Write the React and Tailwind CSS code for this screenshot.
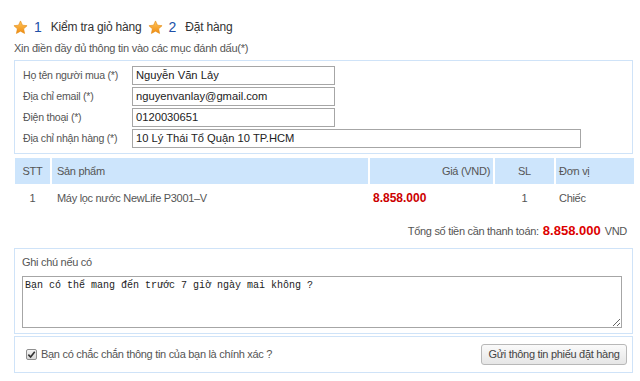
import React from "react";

function Star() {
  return (
    <svg width="15" height="15" viewBox="0 0 24 24" className="shrink-0">
      <defs>
        <linearGradient id="sg" x1="0" y1="0" x2="0" y2="1">
          <stop offset="0" stopColor="#ffc65a" />
          <stop offset="1" stopColor="#f08c12" />
        </linearGradient>
      </defs>
      <polygon
        points="12,1.5 15.1,8.3 22.5,9.1 17,14.1 18.5,21.5 12,17.8 5.5,21.5 7,14.1 1.5,9.1 8.9,8.3"
        fill="url(#sg)"
        stroke="#e48a10"
        strokeWidth="1"
        strokeLinejoin="round"
      />
    </svg>
  );
}

const rows = [
  { label: "Họ tên người mua (*)", value: "Nguyễn Văn Lảy", w: "w-[203px]" },
  { label: "Địa chỉ email (*)", value: "nguyenvanlay@gmail.com", w: "w-[203px]" },
  { label: "Điện thoại (*)", value: "0120030651", w: "w-[203px]" },
  { label: "Địa chỉ nhận hàng (*)", value: "10 Lý Thái Tổ Quận 10 TP.HCM", w: "w-[449px]" },
];

export default function App() {
  return (
    <div className="w-[640px] h-[381px] bg-white text-[#444] overflow-hidden font-['Liberation_Sans',Arial,sans-serif]">
      {/* steps */}
      <div className="mt-[19px] h-[16px] pl-[13px] flex items-center text-[12px] text-[#333]">
        <Star />
        <span className="ml-[6px] text-[14px] text-[#2050a8]">1</span>
        <span className="ml-[9px] tracking-[-0.2px]">Kiểm tra giỏ hàng</span>
        <span className="ml-[7px]"><Star /></span>
        <span className="ml-[5px] text-[14px] text-[#2050a8]">2</span>
        <span className="ml-[9px] tracking-[-0.2px]">Đặt hàng</span>
      </div>

      <div className="mt-[6px] pl-[14px] h-[14px] leading-[14px] text-[11px] text-[#555] tracking-[-0.25px]">
        Xin điền đầy đủ thông tin vào các mục đánh dấu(*)
      </div>

      {/* customer info */}
      <div className="mt-[5px] ml-[14px] w-[619px] border border-[#cfe3f8] pt-[5px] pb-[5px] pl-[8px] flex flex-col gap-[2px]">
        {rows.map((r) => (
          <div key={r.label} className="flex items-center h-[19px]">
            <div className="w-[109px] text-[10.6px] text-[#555] tracking-[-0.25px]">{r.label}</div>
            <div
              className={`${r.w} h-[19px] border border-[#a6a6a6] bg-white pl-[3px] text-[11.2px] text-[#222] leading-[17px]`}
            >
              {r.value}
            </div>
          </div>
        ))}
      </div>

      {/* table */}
      <div className="mt-[4px] ml-[15px] w-[617px] text-[11px] text-[#555] tracking-[-0.3px]">
        <div className="grid grid-cols-[35px_316px_123px_59px_78px] gap-x-[2px] h-[26px]">
          <div className="bg-[#cde5fc] flex items-center justify-center">STT</div>
          <div className="bg-[#cde5fc] flex items-center pl-[5px]">Sản phẩm</div>
          <div className="bg-[#cde5fc] flex items-center justify-end pr-[3px]">Giá (VND)</div>
          <div className="bg-[#cde5fc] flex items-center justify-center">SL</div>
          <div className="bg-[#cde5fc] flex items-center pl-[3px]">Đơn vị</div>
        </div>
        <div className="grid grid-cols-[35px_316px_123px_59px_78px] gap-x-[2px] h-[28px]">
          <div className="flex items-center justify-center">1</div>
          <div className="flex items-center pl-[5px]">Máy lọc nước NewLife P3001–V</div>
          <div className="flex items-center pl-[3px] text-[12px] font-bold text-[#cc0000] tracking-normal">8.858.000</div>
          <div className="flex items-center justify-center">1</div>
          <div className="flex items-center pl-[3px]">Chiếc</div>
        </div>
      </div>

      <div className="mt-[9px] w-[627px] flex justify-end items-baseline text-[11px] text-[#555] tracking-[-0.3px]">
        <span>Tổng số tiền cần thanh toán:</span>
        <span className="ml-[4px] text-[13px] font-bold text-[#dd0000] tracking-normal">8.858.000</span>
        <span className="ml-[4px]">VND</span>
      </div>

      {/* note */}
      <div className="mt-[7px] ml-[14px] w-[619px] h-[86px] border border-[#cfe3f8] pl-[7px] pr-[10px] pt-[6px]">
        <div className="text-[11px] text-[#555] tracking-[-0.3px] leading-[14px]">Ghi chú nếu có</div>
        <textarea
          readOnly
          defaultValue="Bạn có thể mang đến trước 7 giờ ngày mai không ?"
          className="mt-[7px] block w-[600px] h-[52px] border border-[#a6a6a6] px-[2px] py-[2px] text-[10px] leading-[13px] text-[#222] font-['Liberation_Mono','DejaVu_Sans_Mono',monospace] outline-none"
        />
      </div>

      {/* confirm */}
      <div className="mt-[2px] ml-[14px] w-[619px] h-[37px] border border-[#cfe3f8] flex items-center pl-[11px] pr-[5px]">
        <span className="w-[11px] h-[11px] border border-[#8f8f8f] rounded-[2px] bg-[linear-gradient(#f4f4f4,#d8d8d8)] flex items-center justify-center">
          <svg width="9" height="9" viewBox="0 0 10 10">
            <path d="M1.5 5.2 L4 7.8 L8.6 2" fill="none" stroke="#333" strokeWidth="1.8" />
          </svg>
        </span>
        <span className="ml-[4px] text-[11px] text-[#555] tracking-[-0.3px]">
          Bạn có chắc chắn thông tin của bạn là chính xác ?
        </span>
        <button className="ml-auto w-[146px] h-[21px] border border-[#b8b8b8] rounded-[3px] bg-[linear-gradient(#fafafa,#e6e6e6)] text-[11px] text-[#444] tracking-[-0.3px]">
          Gửi thông tin phiếu đặt hàng
        </button>
      </div>
    </div>
  );
}
